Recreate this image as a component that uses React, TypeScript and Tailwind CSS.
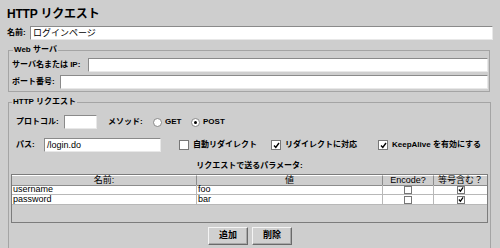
import React from "react";

const jp = "font-['Liberation_Sans','Noto_Sans_CJK_JP',sans-serif]";

const TextBox = ({ value = "", className = "" }: { value?: string; className?: string }) => (
  <div
    className={`h-[14px] bg-white border border-t-[#8a8a8a] border-l-[#8a8a8a] border-b-[#e8e8e8] border-r-[#e8e8e8] px-[2px] text-[9px] leading-[12px] font-normal text-black ${className}`}
  >
    {value}
  </div>
);

const Check = ({ on, className = "" }: { on?: boolean; className?: string }) => (
  <span
    className={`inline-flex shrink-0 w-[10px] h-[10px] bg-white border border-[#777] items-center justify-center ${className}`}
  >
    {on && (
      <svg width="7" height="7" viewBox="0 0 7 7">
        <path d="M1 3.5 L2.8 5.5 L6 1" fill="none" stroke="#000" strokeWidth="1.4" />
      </svg>
    )}
  </span>
);

const Radio = ({ on }: { on?: boolean }) => (
  <span className="inline-flex shrink-0 w-[9px] h-[9px] rounded-full bg-white border border-[#888] items-center justify-center">
    {on && <span className="w-[3px] h-[3px] rounded-full bg-black" />}
  </span>
);

const Button = ({ label }: { label: string }) => (
  <div className="w-[40px] h-[18px] flex items-center justify-center bg-[#d0d0d0] border border-t-[#f4f4f4] border-l-[#f4f4f4] border-b-[#6a6a6a] border-r-[#6a6a6a] shadow-[inset_-1px_-1px_0_#a8a8a8] text-[9px] font-bold">
    {label}
  </div>
);

const CheckLabel = ({ on, label, w }: { on?: boolean; label: string; w: string }) => (
  <div className={`flex items-center gap-[4px] ${w}`}>
    <Check on={on} />
    <span className="whitespace-nowrap">{label}</span>
  </div>
);

const rows = [
  { name: "username", value: "foo" },
  { name: "password", value: "bar" },
];

export default function App() {
  return (
    <div className={`w-[500px] h-[248px] overflow-hidden bg-[#cecece] text-black ${jp}`}>
      <div className="pt-[7px] pl-[7px] h-[23px] text-[12px] leading-[15px] font-bold tracking-[-0.2px]">HTTP リクエスト</div>

      <div className="flex items-center h-[15px] mt-[2px] pl-[7px] pr-[7px] text-[8px] font-bold">
        <span className="w-[23px] whitespace-nowrap">名前:</span>
        <TextBox value="ログインページ" className="flex-1" />
      </div>

      {/* Web server */}
      <fieldset className="ml-[8px] mr-[10px] mt-[5px] border border-[#a4a4a4] pl-[3px] pr-[1px] pb-[2px]">
        <legend className="ml-[1px] px-[1px] text-[8px] leading-[10px] font-bold">Web サーバ</legend>
        <div className="flex flex-col gap-[3px] mt-[3px]">
          <div className="flex items-center text-[8px] font-bold">
            <span className="w-[76px] whitespace-nowrap">サーバ名または IP:</span>
            <TextBox className="flex-1" />
          </div>
          <div className="flex items-center text-[8px] font-bold">
            <span className="w-[48px] whitespace-nowrap">ポート番号:</span>
            <TextBox className="flex-1" />
          </div>
        </div>
      </fieldset>

      {/* HTTP request */}
      <fieldset className="ml-[8px] mr-[10px] mt-[5px] h-[200px] border border-[#a4a4a4] px-[2px]">
        <legend className="ml-[1px] px-[1px] text-[8px] leading-[10px] font-bold">HTTP リクエスト</legend>

        <div className="flex items-center h-[14px] mt-[8px] pl-[5px] text-[8px] font-bold">
          <span className="w-[48px] whitespace-nowrap">プロトコル:</span>
          <TextBox className="w-[33px]" />
          <span className="ml-[11px] w-[45px] whitespace-nowrap">メソッド:</span>
          <Radio />
          <span className="ml-[3px] w-[26px]">GET</span>
          <Radio on />
          <span className="ml-[3px]">POST</span>
        </div>

        <div className="flex items-center h-[14px] mt-[9px] pl-[5px] text-[8px] font-bold">
          <span className="w-[28px] whitespace-nowrap">パス:</span>
          <TextBox value="/login.do" className="w-[117px]" />
          <div className="w-[18px]" />
          <CheckLabel label="自動リダイレクト" w="w-[92px]" />
          <CheckLabel on label="リダイレクトに対応" w="w-[107px]" />
          <CheckLabel on label="KeepAlive を有効にする" w="w-[110px]" />
        </div>

        <div className="mt-[8px] h-[12px] text-center text-[8px] leading-[12px] font-bold">
          リクエストで送るパラメータ:
        </div>

        <div className="mt-[2px] h-[49px] border border-[#7c7c7c] bg-[#cecece] text-[9px] font-normal">
          <div className="grid grid-cols-[185px_186px_51px_1fr] h-[10px] leading-[9px] text-center">
            <div className="border-r border-b border-[#8c8c8c] border-t border-t-white">名前:</div>
            <div className="border-r border-b border-[#8c8c8c] border-t border-t-white">値</div>
            <div className="border-r border-b border-[#8c8c8c] border-t border-t-white">Encode?</div>
            <div className="border-b border-[#8c8c8c] border-t border-t-white">等号含む？</div>
          </div>
          {rows.map((r) => (
            <div key={r.name} className="grid grid-cols-[185px_186px_51px_1fr] h-[10px] leading-[9px] bg-white">
              <div className="border-r border-b border-[#b8b8b8] pl-[1px]">{r.name}</div>
              <div className="border-r border-b border-[#b8b8b8] pl-[1px]">{r.value}</div>
              <div className="border-r border-b border-[#b8b8b8] flex items-center justify-center">
                <Check className="!w-[8px] !h-[8px]" />
              </div>
              <div className="border-b border-[#b8b8b8] flex items-center justify-center">
                <Check on className="!w-[8px] !h-[8px]" />
              </div>
            </div>
          ))}
        </div>

        <div className="flex gap-[4px] mt-[4px] pl-[197px]">
          <Button label="追加" />
          <Button label="削除" />
        </div>
      </fieldset>
    </div>
  );
}
